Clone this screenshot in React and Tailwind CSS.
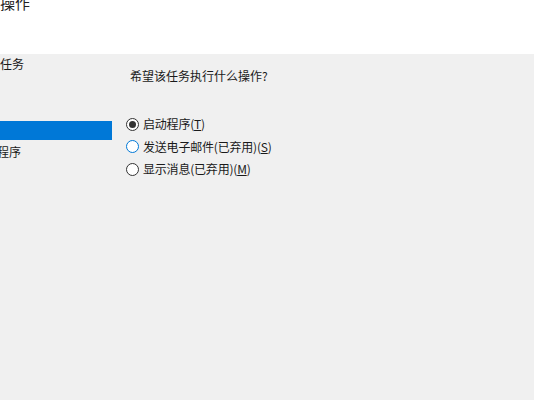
const OPTIONS = [
  { label: "启动程序(", key: "T", state: "checked" },
  { label: "发送电子邮件(已弃用)(", key: "S", state: "hover" },
  { label: "显示消息(已弃用)(", key: "M", state: "idle" },
];

const Radio = ({ state }) => (
  <span
    className={`flex items-center justify-center w-[13px] h-[13px] rounded-full border bg-white ${
      state === "hover" ? "border-[#0078d7]" : "border-[#333]"
    }`}
  >
    {state === "checked" && <span className="w-[7px] h-[7px] rounded-full bg-[#333]" />}
  </span>
);

export default function App() {
  return (
    <div
      className="w-[534px] h-[400px] overflow-hidden bg-[#f0f0f0] text-[#1a1a1a] text-[12px] leading-[16px]"
      style={{ fontFamily: '"Noto Sans CJK SC", "Noto Sans", sans-serif' }}
    >
      {/* header */}
      <div className="h-[54px] bg-white overflow-hidden">
        <div className="-mt-[7px] text-[15px] leading-[20px] text-[#222]">操作</div>
      </div>

      <div className="flex">
        {/* steps sidebar */}
        <div className="w-[112px] overflow-hidden">
          <div className="mt-[2px] h-[16px] whitespace-nowrap">任务</div>
          <div className="mt-[49px] h-[19px] bg-[#0078d7]" />
          <div className="mt-[4px] h-[16px] -ml-[3px] whitespace-nowrap">程序</div>
        </div>

        {/* main panel */}
        <div className="flex-1">
          <div className="mt-[14px] ml-[18px]">希望该任务执行什么操作?</div>
          <div className="mt-[29px] ml-[14px] flex flex-col">
            {OPTIONS.map((o) => (
              <label key={o.key} className="flex items-center gap-[4px] h-[22.5px] tracking-[-0.2px]">
                <Radio state={o.state} />
                <span>
                  {o.label}
                  <span className="underline">{o.key}</span>)
                </span>
              </label>
            ))}
          </div>
        </div>
      </div>
    </div>
  );
}
